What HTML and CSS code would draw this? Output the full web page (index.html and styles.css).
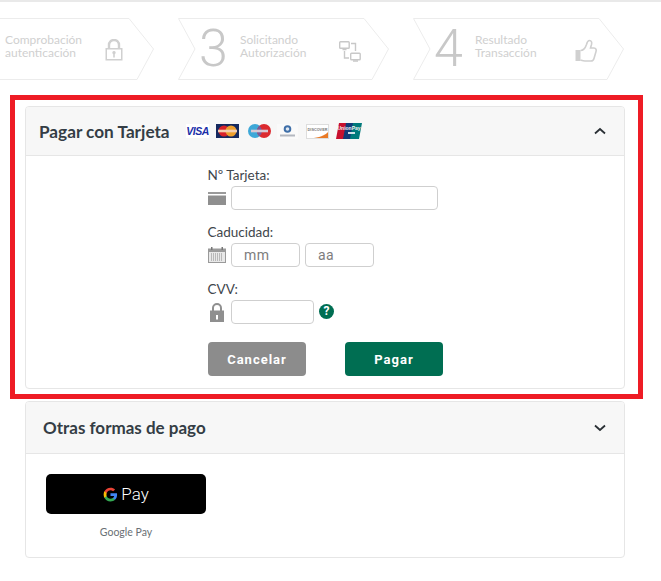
FILE: index.html
```html
<!DOCTYPE html>
<html lang="es">
<head>
<meta charset="utf-8">
<title>Pagar con Tarjeta</title>
<link rel="stylesheet" href="styles.css">
</head>
<body>
<div class="topbar"></div>
<div class="steps">
  <div class="step">
    <svg class="step-bg" width="211" height="62" viewBox="0 0 211 62"><path d="M.5.5H186L210.500 31 194 61.500H.5L17 31Z"/></svg>
    <span class="step-num"></span>
    <span class="step-text">Comprobación<br>autenticación</span>
    <svg class="step-icon" width="18" height="22" viewBox="0 0 18 22"><path fill="none" stroke="#d0d0d0" stroke-width="2.400" d="M4 10V6a5 5 0 0 1 10 0V10"/><path fill="#d0d0d0" fill-rule="evenodd" d="M.5 9h17v12.500H.5ZM2 10.500v9.500h14v-9.500ZM9 12a1.700 1.700 0 0 0-.8 3.200V18.500h1.600v-3.300A1.700 1.700 0 0 0 9 12Z"/></svg>
  </div>
  <div class="step">
    <svg class="step-bg" width="211" height="62" viewBox="0 0 211 62"><path d="M.5.5H186L210.500 31 194 61.500H.5L17 31Z"/></svg>
    <span class="step-num">3</span>
    <span class="step-text">Solicitando<br>Autorización</span>
    <svg class="step-icon icon-net" width="22" height="22" viewBox="0 0 22 22"><g fill="none" stroke="#c8c8c8" stroke-width="1.400"><rect x=".7" y="1.700" width="9.500" height="6.500" rx=".8"/><rect x="11.700" y="13.200" width="9.500" height="6.500" rx=".8"/><path d="M5.500 8.500v1M5.500 11v7H10M12 3.500h4.500V11M3.500 9.500h4M14 21h5"/></g></svg>
  </div>
  <div class="step">
    <svg class="step-bg" width="211" height="62" viewBox="0 0 211 62"><path d="M.5.5H186L210.500 31 194 61.500H.5L17 31Z"/></svg>
    <span class="step-num">4</span>
    <span class="step-text">Resultado<br>Transacción</span>
    <svg class="step-icon" width="22" height="24" viewBox="0 0 22 24"><path fill="#d0d0d0" d="M.5 11h5v11h-5Z"/><path fill="none" stroke="#d0d0d0" stroke-width="1.600" d="M5.500 11.500c3 0 5-3 6-6 .5-2 1-4 3-4s2.500 2 2 4l-1 3.500h3.500c2 0 2.500 2 2 3.500l-2 7c-.5 2-1.500 2.500-3 2.500h-6c-2 0-3-.5-4.500-1"/></svg>
  </div>
</div>

<div class="highlight">
  <section class="card">
    <header class="card-head head-pay">
      <h2 class="title-pay">Pagar con Tarjeta</h2>
      <div class="brands">
        <svg class="b-visa" width="23" height="14" viewBox="0 0 23 14"><rect width="23" height="14" fill="#fff"/><text x="11.500" y="11" text-anchor="middle" class="visa-t">VISA</text></svg>
        <svg class="b-mc" width="23" height="14" viewBox="0 0 23 14"><rect width="23" height="14" fill="#15295f"/><circle cx="8" cy="7" r="5.500" fill="#d9222a"/><circle cx="15" cy="7" r="5.500" fill="#ee9f2d"/><rect x="2" y="5.700" width="19" height="2.600" fill="#f3cdb0"/></svg>
        <svg class="b-mae" width="23" height="14" viewBox="0 0 23 14"><circle cx="7" cy="7" r="7" fill="#3ea8d8"/><circle cx="16" cy="7" r="7" fill="#dc2a2f"/><path d="M11.500 1.700a7 7 0 0 1 0 10.600 7 7 0 0 1 0-10.600Z" fill="#7a5a9a"/><rect x="3" y="5.700" width="17" height="2.600" fill="#d8c8d4"/></svg>
        <svg class="b-din" width="21" height="15" viewBox="0 0 21 15"><rect width="21" height="15" fill="#fafafa"/><circle cx="10.500" cy="5" r="3.800" fill="#3f6fa8"/><circle cx="10.500" cy="5" r="1.800" fill="#dfe8f2"/><rect x="3" y="10.500" width="15" height="2" fill="#b4b8c0"/></svg>
        <svg class="b-dis" width="23" height="15" viewBox="0 0 23 15"><rect width="23" height="15" fill="#fff"/><path d="M22.500 7.500V14.500H5c8-1 14-3 17.500-7Z" fill="#e97a26"/><rect x=".5" y=".5" width="22" height="14" fill="none" stroke="#ddd"/><text x="11.500" y="6.500" text-anchor="middle" class="dis-t">DISCOVER</text></svg>
        <svg class="b-up" width="26" height="16" viewBox="0 0 26 16"><path d="M3 0h8L8 16H0Z" fill="#c8102e"/><path d="M10 0h8l-3 16H7Z" fill="#123a78"/><path d="M17 0h9l-3 16h-9Z" fill="#007a7c"/><text x="13" y="7" text-anchor="middle" class="up-t">UnionPay</text><rect x="12" y="9" width="7" height="2" fill="#cfe0e6"/></svg>
      </div>
      <svg class="chev" width="12" height="8" viewBox="0 0 12 8"><path d="M1 6.500 6 2l5 4.500" fill="none" stroke="#2b3136" stroke-width="1.800"/></svg>
    </header>
    <form class="form">
      <label class="lbl" for="num">Nº Tarjeta:</label>
      <div class="row">
        <svg class="ficon" width="18" height="13" viewBox="0 0 18 13"><rect y="0" width="18" height="2" fill="#9a9a9a"/><rect y="3.500" width="18" height="9.500" fill="#8f8f8f"/></svg>
        <input class="inp w-num" id="num" type="text">
      </div>
      <label class="lbl" for="mm">Caducidad:</label>
      <div class="row">
        <svg class="ficon" width="18" height="16" viewBox="0 0 18 16"><rect y="1.500" width="18" height="14.500" fill="#9a9a9a"/><rect x="1" y="5" width="16" height="10" fill="#e8e8e8"/><rect x="3" y="0" width="1.500" height="3" fill="#777"/><rect x="13.500" y="0" width="1.500" height="3" fill="#777"/><path d="M3 7h12M3 9h12M3 11h12M3 13h12" stroke="#888" stroke-dasharray="1 1"/></svg>
        <input class="inp w-date" id="mm" type="text" placeholder="mm">
        <input class="inp w-date" type="text" placeholder="aa" aria-label="aa">
      </div>
      <label class="lbl" for="cvv">CVV:</label>
      <div class="row">
        <svg class="ficon lock" width="14" height="19" viewBox="0 0 14 19"><path d="M3 8V5a4 4 0 0 1 8 0v3" fill="none" stroke="#8f8f8f" stroke-width="2"/><path fill="#8f8f8f" fill-rule="evenodd" d="M0 7.500h14V19H0ZM6 12v4.500h2V12Z"/></svg>
        <input class="inp w-cvv" id="cvv" type="text">
        <span class="help">?</span>
      </div>
      <div class="actions">
        <button class="btn btn-cancel" type="button">Cancelar</button>
        <button class="btn btn-pay" type="button">Pagar</button>
      </div>
    </form>
  </section>
</div>

<section class="card card-other">
  <header class="card-head head-other">
    <h2 class="title-other">Otras formas de pago</h2>
    <svg class="chev" width="12" height="8" viewBox="0 0 12 8"><path d="M1 1.500 6 6l5-4.500" fill="none" stroke="#2b3136" stroke-width="1.800"/></svg>
  </header>
  <div class="other-body">
    <button class="gpay" type="button">
      <svg width="15" height="15" viewBox="0 0 48 48"><path fill="#4285f4" d="M45 24.500c0-1.600-.1-3.100-.4-4.500H24v8.700h11.800c-.5 2.700-2 5-4.300 6.600v5.500h7c4.100-3.800 6.500-9.400 6.500-16.300Z"/><path fill="#34a853" d="M24 46c5.900 0 10.800-2 14.500-5.200l-7-5.500c-2 1.300-4.500 2.100-7.500 2.100-5.700 0-10.500-3.800-12.300-9H4.500v5.700C8.100 41.200 15.500 46 24 46Z"/><path fill="#fbbc04" d="M11.700 28.400c-.5-1.300-.7-2.800-.7-4.400s.3-3.100.7-4.400v-5.700H4.500C3 16.900 2 20.300 2 24s.9 7.100 2.500 10.100Z"/><path fill="#ea4335" d="M24 10.600c3.200 0 6.100 1.100 8.400 3.300l6.300-6.300C34.800 4.100 29.900 2 24 2 15.500 2 8.100 6.800 4.500 13.900l7.200 5.700c1.800-5.200 6.600-9 12.300-9Z"/></svg>
      <span class="gpay-t">Pay</span>
    </button>
    <div class="gpay-cap">Google Pay</div>
  </div>
</section>
</body>
</html>
```

FILE: styles.css
```css
* { box-sizing: border-box; }
html, body { margin: 0; padding: 0; }
body { background: #fff; font-family: "Lato", "Liberation Sans", sans-serif; color: #3b4248; width: 661px; height: 581px; overflow: hidden; }

.topbar { height: 2px; background: #e9e9e9; }

.steps { display: flex; gap: 24px; margin: 16px 0 0 -57px; height: 62px; }
.step { position: relative; flex: 0 0 211px; height: 62px; }
.step-bg { position: absolute; left: 0; top: 0; }
.step-bg path { fill: #fff; stroke: #ececec; stroke-width: 1; }
.step-num { position: absolute; left: 21px; top: 1px; font: 300 52px/60px "Roboto", sans-serif; color: #c8c8c8; }
.step-text { position: absolute; left: 62px; top: 15px; font-size: 12px; line-height: 13px; color: #d0d0d0; }
.step-icon { position: absolute; left: 162px; top: 21px; }
.icon-net { left: 161px; top: 22px; }

.highlight { margin: 15px 0 0 10px; width: 633px; height: 304px; border: 5px solid #ee1c25; padding: 6px 0 0 10px; }

.card { width: 600px; background: #fff; border: 1px solid #e6e6e6; border-radius: 4px; overflow: hidden; }
.card-head { display: flex; align-items: center; background: #f7f7f7; border-bottom: 1px solid #e6e6e6; }
.head-pay { height: 49px; padding: 0 18px 0 13px; }
.head-other { height: 52px; padding: 0 18px 0 17px; }
.card-head h2 { margin: 0; color: #343d45; font-weight: 700; }
.title-pay { font-size: 17.200px; }
.title-other { font-size: 17px; }
.brands { display: flex; align-items: center; margin-left: 16px; }
.brands svg { display: block; }
.b-mc { margin-left: 7px; }
.b-mae { margin-left: 9px; }
.b-din { margin-left: 6px; }
.b-dis { margin-left: 8px; }
.b-up { margin-left: 7px; }
.visa-t { font: italic 700 10.500px "Liberation Sans", sans-serif; letter-spacing: -.5px; fill: #1a2ea8; }
.dis-t { font: 700 3.800px "Liberation Sans", sans-serif; fill: #777; }
.up-t { font: 700 5px "Liberation Sans", sans-serif; fill: #f2f2f2; }
.chev { margin-left: auto; }

.form { height: 232px; padding: 10px 0 0 182px; }
.lbl { display: block; margin-left: -.5px; font-size: 13.500px; line-height: 19px; color: #3f464c; }
.row { display: flex; align-items: center; gap: 5px; height: 24px; margin: 1px 0 13px; }
.ficon { flex: 0 0 auto; margin-right: 0; }
.lock { margin: 0 2px; }
.inp { height: 24px; border: 1px solid #cfcfcf; border-radius: 4px; background: #fff; font: 14px "Roboto", sans-serif; padding: 0 12px; outline: 0; }
.inp::placeholder { color: #7d7d7d; opacity: 1; letter-spacing: .5px; }
.w-num { width: 207px; }
.w-date { width: 69px; }
.w-cvv { width: 83px; }
.help { width: 15px; height: 15px; margin: 0 0 2px; border-radius: 50%; background: #006e52; color: #fff; font: 700 12px/15px "Roboto", sans-serif; text-align: center; }

.actions { display: flex; gap: 39px; margin-top: 18px; }
.btn { width: 98px; height: 34px; border: 0; border-radius: 4px; color: #fff; font: 700 13px "Roboto", sans-serif; letter-spacing: 1px; padding: 0; }
.btn-cancel { background: #8c8c8c; }
.btn-pay { background: #006e52; }

.card-other { margin: 2px 0 0 25px; height: 157px; }
.other-body { padding: 20px 0 0 20px; }
.gpay { display: flex; align-items: center; justify-content: center; gap: 3px; width: 160px; height: 40px; border: 0; border-radius: 5px; background: #000; padding: 0; }
.gpay-t { color: #fff; font: 300 17px "Roboto", sans-serif; }
.gpay-cap { width: 160px; margin-top: 11px; text-align: center; font-size: 10.500px; line-height: 14px; color: #6a6f75; }
```
